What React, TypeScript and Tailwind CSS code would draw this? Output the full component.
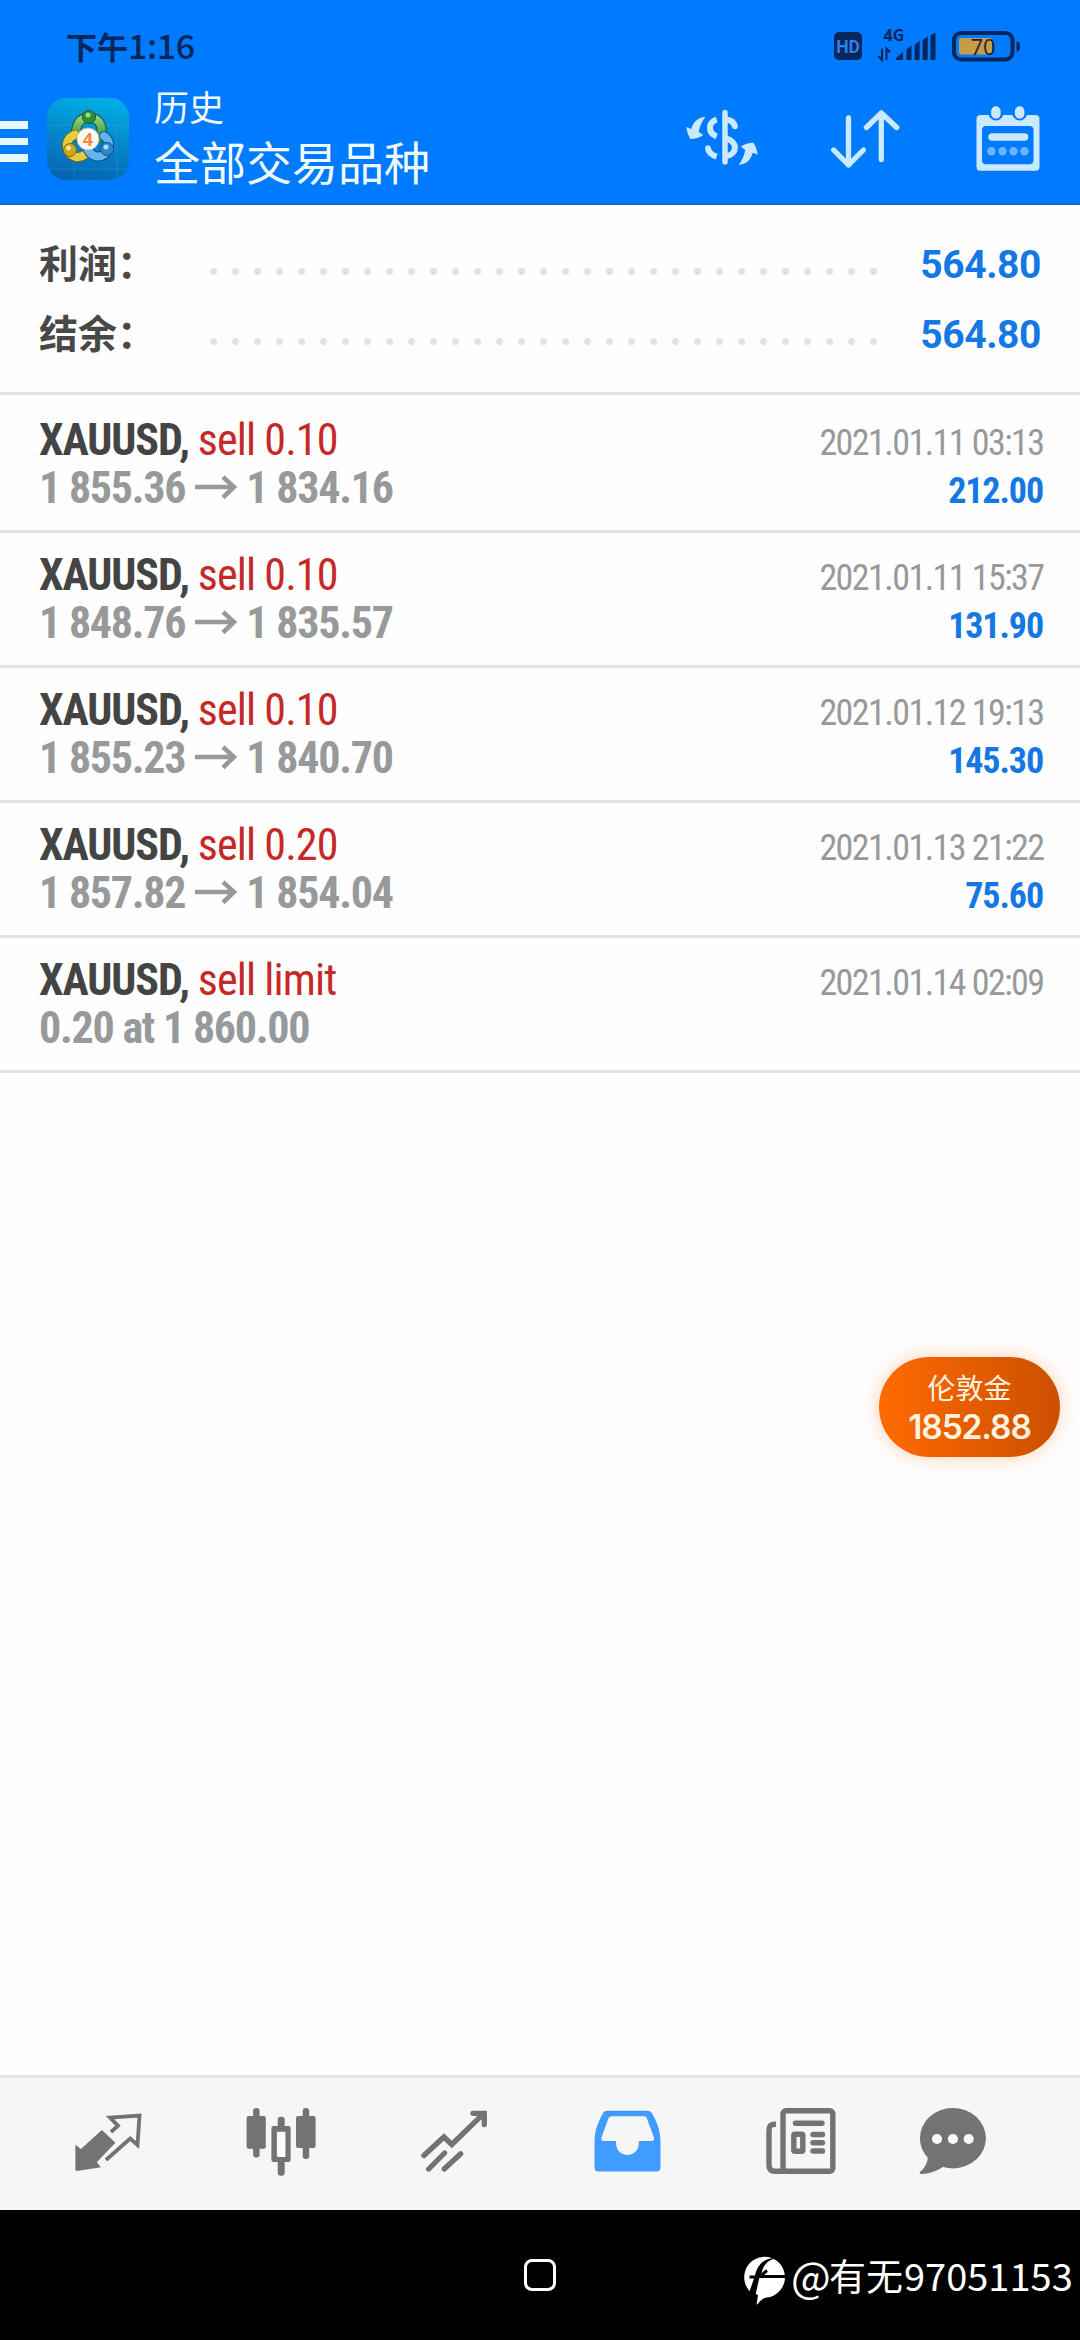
const deals = [
  { side: "sell 0.10", from: "1 855.36", to: "1 834.16", time: "2021.01.11 03:13", profit: "212.00" },
  { side: "sell 0.10", from: "1 848.76", to: "1 835.57", time: "2021.01.11 15:37", profit: "131.90" },
  { side: "sell 0.10", from: "1 855.23", to: "1 840.70", time: "2021.01.12 19:13", profit: "145.30" },
  { side: "sell 0.20", from: "1 857.82", to: "1 854.04", time: "2021.01.13 21:22", profit: "75.60" },
  // pending order, never filled
  { side: "sell limit", from: "0.20 at 1 860.00", time: "2021.01.14 02:09" },
];

type Deal = { side: string; from: string; to?: string; time: string; profit?: string };

function StatusBar() {
  return (
    <div className="flex h-[92px] items-start justify-between pl-[66px] pr-[60px] text-[#06265c]">
      <div className="mt-[22px] flex h-[46px] items-center text-[31px] font-bold leading-none">
        下午<span className="text-[34px] font-medium tracking-[-0.4px]">1:16</span>
      </div>
      <svg className="mt-[22px]" width="187" height="44" viewBox="0 -4 187 44" fill="currentColor">
        {/* HD */}
        <rect x="1" y="6" width="28" height="28" rx="5" />
        <text x="15" y="26.500" fontSize="17.500" fontWeight="700" fill="#2f80ea" textAnchor="middle" fontFamily="Roboto, sans-serif">HD</text>
        {/* signal */}
        <text x="50.500" y="15" fontSize="16" fontWeight="700" fontFamily="Open Sans, sans-serif">4G</text>
        <path d="M49 22.500V34l-3.500-4M53.500 34V22.500l3.500 4" fill="none" stroke="currentColor" strokeWidth="2" />
        <path d="M63 34v-2l7-6v8zM73.500 34V23.500l5-4V34zM81.700 34V19l5-4.500V34zM89.700 34V14l5-3.500V34zM97.500 34V9.500l5-3V34z" />
        {/* battery */}
        <rect x="121" y="7" width="58.500" height="26.500" rx="7" fill="none" stroke="currentColor" strokeWidth="4" />
        <path d="M183.500 15.500q3.500 0 3.500 5t-3.500 5z" />
        <rect x="126" y="12" width="33" height="16.500" rx="2.500" fill="#c69c49" />
        <text x="150" y="28.500" fontSize="22" fill="#1c2433" textAnchor="middle" fontFamily="Open Sans, sans-serif">70</text>
      </svg>
    </div>
  );
}

function AppLogo() {
  return (
    <svg width="82" height="82" viewBox="0 0 82 82">
      <defs>
        <linearGradient id="tile" x1="0.600" y1="0" x2="0.400" y2="1">
          <stop offset="0" stopColor="#02aee6" />
          <stop offset="0.500" stopColor="#0486cb" />
          <stop offset="1" stopColor="#0565b3" />
        </linearGradient>
        <linearGradient id="green" x1="0" y1="0" x2="0" y2="1">
          <stop offset="0" stopColor="#8fd07c" />
          <stop offset="1" stopColor="#3a9638" />
        </linearGradient>
      </defs>
      <rect width="82" height="82" rx="19" fill="url(#tile)" />
      <path d="M0 27h82M0 71h82M27 0v82M70 0v82" stroke="#4cc3ee" strokeOpacity="0.200" />
      <g fill="none" strokeLinecap="round">
        <path d="M31 40C26 28 33 19.500 42 19.500s16 8.500 11 20.500" stroke="#1d5a2c" strokeWidth="10" />
        <path d="M31 40C26 28 33 19.500 42 19.500s16 8.500 11 20.500" stroke="url(#green)" strokeWidth="8" />
        <path d="M28 36.500c-9 4-11 13-4 20 5 4 10 3 14 0" stroke="#6d6a17" strokeWidth="10" />
        <path d="M28 36.500c-9 4-11 13-4 20 5 4 10 3 14 0" stroke="#e1cf3f" strokeWidth="8" />
        <path d="M57 38c7 5 6 12 2 17-6 6-14 4-18-3" stroke="#0b4f8f" strokeWidth="10" />
        <path d="M57 38c7 5 6 12 2 17-6 6-14 4-18-3" stroke="#63b4ec" strokeWidth="8" />
      </g>
      <circle cx="42" cy="19" r="6.500" fill="#2f8f38" stroke="#1d5a2c" />
      <circle cx="41" cy="17" r="2.500" fill="#9bd996" />
      <circle cx="23" cy="52" r="6.500" fill="#c9a722" stroke="#7d6a17" />
      <circle cx="21.500" cy="50" r="2.500" fill="#f2e58a" />
      <circle cx="60" cy="51" r="6.500" fill="#2f86cd" stroke="#0b4f8f" />
      <circle cx="59" cy="49" r="2.500" fill="#a9dcf8" />
      <circle cx="41" cy="41" r="11" fill="#fbfaf7" stroke="#b9c0b4" />
      <text x="41" y="47.500" fontSize="18" fontWeight="700" fill="#ef8a3c" textAnchor="middle" fontFamily="Open Sans, sans-serif">4</text>
    </svg>
  );
}

function CurrencyIcon() {
  return (
    <svg width="90" height="75" viewBox="0 0 90 75" fill="none" stroke="#cbe9ff" strokeWidth="5.500">
      <g fill="#cbe9ff" stroke="none">
        <path d="M25.300 12C18 12 13 17 11.300 24L6.300 22c.7 5 2.200 9 4.200 12 4.500 0 9.500-1.500 12.800-4l-4.600-3.300C20 21 22 16 25.300 12z" />
        <path transform="rotate(180 42 35.900)" d="M25.300 12C18 12 13 17 11.300 24L6.300 22c.7 5 2.200 9 4.200 12 4.500 0 9.500-1.500 12.800-4l-4.600-3.300C20 21 22 16 25.300 12z" />
      </g>
      <path d="M45 7.500V57" strokeLinecap="round" />
      <path strokeWidth="6" d="M36.700 14.500c-9 3-9 13.500 0 17" />
      <path strokeWidth="6" d="M28 43c.5 5 3.500 7 8.700 8.500" />
      <path d="M28 43v.1M55 21.500v.1" strokeLinecap="round" />
      <path strokeWidth="6" d="M46 14.500c5 .5 8 2.500 9 7" />
      <path strokeWidth="6" d="M46 33.500c12 3 12 15.500 0 17.500" />
    </svg>
  );
}

function SortIcon() {
  return (
    <svg width="80" height="80" viewBox="0 0 80 80" fill="none" stroke="#cbe9ff" strokeWidth="5.300" strokeLinecap="round" strokeLinejoin="round">
      <path d="M23.500 18v47M8.700 50l14.800 15 14.900-15" />
      <path d="M56.300 59.500V13M41.400 27.500L56.300 13l15.400 14.500" />
    </svg>
  );
}

function CalendarIcon() {
  return (
    <svg width="80" height="80" viewBox="0 0 80 80">
      <path fill="#cbe9ff" fillRule="evenodd" d="M10.500 15h55a4 4 0 0 1 4 4v47.700a4 4 0 0 1-4 4h-55a4 4 0 0 1-4-4V19a4 4 0 0 1 4-4zm5.500 11a4 4 0 0 0-4 4v30.300a4 4 0 0 0 4 4h43.500a4 4 0 0 0 4-4V30a4 4 0 0 0-4-4z" />
      <g stroke="#007aff" strokeWidth="15" strokeLinecap="round">
        <path d="M25.900 10v3M49.700 10v3" />
      </g>
      <g stroke="#cbe9ff" strokeLinecap="round">
        <path strokeWidth="9.500" d="M25.900 11v3M49.700 11v3" />
        <path strokeWidth="7.500" d="M22 37h32.500" />
      </g>
      <g fill="#6db4ff">
        <circle cx="21.400" cy="51.300" r="4.200" />
        <circle cx="32.500" cy="51.300" r="4.200" />
        <circle cx="43.500" cy="51.300" r="4.200" />
        <circle cx="54.500" cy="51.300" r="4.200" />
      </g>
    </svg>
  );
}

function Header() {
  return (
    <header className="h-[205px] border-b-2 border-[#1269c8] bg-[#007aff]">
      <StatusBar />
      <div className="flex h-[108px] items-start">
        <div className="mt-[29px] flex w-[28px] flex-col gap-[9px]">
          <span className="h-[7.500px] bg-[#e8f8ff]" />
          <span className="h-[7.500px] bg-[#e8f8ff]" />
          <span className="h-[7.500px] bg-[#e8f8ff]" />
        </div>
        <div className="ml-[19px] mt-[6px]">
          <AppLogo />
        </div>
        <div className="-mt-[4px] ml-[25px] flex flex-col text-[#f0fbff]">
          <div className="h-[35px] text-[35px] leading-[35px]">历史</div>
          <div className="mt-[14px] h-[46px] text-[46px] leading-[46px]">全部交易品种</div>
        </div>
        <div className="ml-auto flex pr-[30px] pt-[8px]">
          <div className="mr-[55px] mt-[5px]">
            <CurrencyIcon />
          </div>
          <div className="mr-[65px]">
            <SortIcon />
          </div>
          <CalendarIcon />
        </div>
      </div>
    </header>
  );
}

function SummaryRow({ label, value }: { label: string; value: string }) {
  return (
    <div className="flex h-[70px] items-center pl-[39px] pr-[39px]">
      <div className="-mt-[6px] w-[171px] text-[39px] font-bold text-[#484848]">{label}</div>
      <div className="mt-[14px] flex gap-[15px]">
        {Array.from({ length: 31 }, (_, i) => (
          <span key={i} className="size-[7px] rounded-full bg-[#e2e2e2]" />
        ))}
      </div>
      <div className="ml-auto mt-[2px] text-[39px] font-bold tracking-[-0.4px] text-[#1478e4] [font-family:Roboto,sans-serif]">
        {value}
      </div>
    </div>
  );
}

function DealRow({ deal }: { deal: Deal }) {
  return (
    <div className="flex h-[135px] justify-between border-b-[3px] border-[#e3e3e3] pl-[39px] pr-[38px] pt-[18px]">
      <div className="text-[44px] leading-[48px] tracking-[-1.1px]">
        <div>
          <span className="font-bold text-[#444]">XAUUSD,</span>{" "}
          <span className="tracking-[-0.9px] text-[#c62828]">{deal.side}</span>
        </div>
        <div className="flex items-center font-bold tracking-[-1.25px] text-[#97999b]">
          {deal.from}
          {deal.to && (
            <>
              <svg className="ml-[10px] mr-[8px]" width="43" height="26" viewBox="0 0 43 26" fill="none" stroke="currentColor" strokeWidth="4.500">
                <path d="M0 12h39M28 2L39 12 28 22.500" />
              </svg>
              {deal.to}
            </>
          )}
        </div>
      </div>
      <div className="pt-[3px] text-right text-[36px] leading-[48px]">
        <div className="-mr-[1.500px] tracking-[-1.550px] text-[#97999b]">{deal.time}</div>
        {deal.profit && <div className="-mr-[1px] font-bold tracking-[-1.100px] text-[#1478e4]">{deal.profit}</div>}
      </div>
    </div>
  );
}

function TabBar() {
  return (
    <nav className="flex h-[135px] border-t-[3px] border-[#e5e5e5] bg-[#f6f6f6] pl-[70px] pt-[22px] text-[#737373]">
      {/* quotes */}
      <svg width="80" height="80" viewBox="0 0 80 80">
        <path fill="currentColor" d="M31.900 30l13.500 12.700-18.600 19.600 4.100 5L6.900 71a1.500 1.500 0 0 1-1.500-1.500V44.700l5.500 4.300z" />
        <path fill="none" stroke="currentColor" strokeWidth="3.800" d="M41 32l7-6.300-8-8 29.500-2.200-2 29.500-7.300-6.500L36 60" />
      </svg>
      {/* chart */}
      <svg className="ml-[90px]" width="80" height="80" viewBox="0 0 80 80">
        <g fill="currentColor">
          <rect x="13.100" y="8" width="6.500" height="49.500" rx="3" />
          <rect x="6.600" y="16" width="19.200" height="32.700" rx="2" />
          <rect x="62.700" y="8" width="6.500" height="51" rx="3" />
          <rect x="56" y="16" width="19.600" height="32" rx="2" />
          <rect x="37.700" y="16.700" width="7" height="59" rx="3" />
          <rect x="31.400" y="26" width="19.200" height="36" rx="2" />
        </g>
        <rect x="36.900" y="31.700" width="8.600" height="25.300" rx="1" fill="#fafafa" />
      </svg>
      {/* trade */}
      <svg className="ml-[95px]" width="80" height="80" viewBox="0 0 80 80" fill="none" stroke="currentColor" strokeWidth="5.300" strokeLinecap="round">
        <path d="M8.900 55.500l20-18.500 7.900 7.500 32-31.200M58 13.300h11.300v11.200" />
        <path d="M29.600 53L13.700 69M45.700 53.700L29.200 69" />
      </svg>
      {/* history */}
      <svg className="ml-[95px]" width="80" height="80" viewBox="0 0 80 80">
        <path fill="#409cff" fillRule="evenodd" d="M17.500 10.700H57c3 0 4.500 1.300 6 4.300 5 9 7.500 17 7.500 28v24.500a4 4 0 0 1-4 4h-58a4 4 0 0 1-4-4V43c0-11 2.500-19 7.500-28 1.500-3 2.500-4.300 5.500-4.300zM22 16.300c-2 0-3 .7-3.700 2.500l-6.700 18.500c-.7 2.200 0 3.700 2.200 3.700h12.300v2.500c0 6.500 4.900 11.500 11.300 11.500s11.400-5 11.400-11.500V41h13c2 0 2.800-1.500 2-3.700L57 18.800c-.6-1.800-1.600-2.500-3.600-2.500z" />
      </svg>
      {/* news */}
      <svg className="ml-[90px]" width="80" height="80" viewBox="0 0 80 80" fill="none" stroke="currentColor" strokeWidth="5.400">
        <rect x="23" y="10.700" width="49.800" height="60.600" rx="3" />
        <path d="M16 24.300h-1.500q-5.500 0-5.500 6V65q0 6.300 6 6.300h10" />
        <path d="M35.500 23.300h26.500M53 34.500h9.500M53 42.700h9.500M53 51h9.500" strokeLinecap="round" />
        <rect x="33.800" y="34.300" width="9" height="17" rx="1" />
      </svg>
      {/* messages */}
      <svg className="ml-[74px]" width="80" height="80" viewBox="0 0 80 80">
        <g fill="currentColor">
          <ellipse cx="38.900" cy="38.200" rx="33" ry="30.200" />
          <path d="M13.500 54c1.500 6-2 13.500-7.500 18-.8 1.200-.2 2 1 2 10-.5 17-3.500 22.500-7.500z" />
        </g>
        <g fill="#fafafa">
          <circle cx="23" cy="39" r="5.100" />
          <circle cx="38.900" cy="39" r="5.100" />
          <circle cx="54.700" cy="39" r="5.100" />
        </g>
      </svg>
    </nav>
  );
}

export default function App() {
  return (
    <div className="relative flex h-[2340px] w-[1080px] flex-col overflow-hidden bg-[#fefefe] [font-family:'Noto_Sans_CJK_SC',sans-serif]">
      <Header />

      <section className="h-[190px] border-b-[3px] border-[#e3e3e3] pt-[24px]">
        <SummaryRow label="利润：" value="564.80" />
        <SummaryRow label="结余：" value="564.80" />
      </section>

      <main className="flex-1 pt-[3px] [font-family:'Roboto_Condensed',Roboto,sans-serif] [font-stretch:75%]">
        {deals.map((deal) => (
          <DealRow key={deal.time} deal={deal} />
        ))}
      </main>

      <TabBar />

      {/* system navigation */}
      <div className="flex h-[130px] items-start bg-black text-white">
        <div className="ml-[524px] mt-[49px] size-[32px] rounded-[8px] border-[3px] border-white" />
        <svg className="ml-[187px] mt-[46px]" width="44" height="52" viewBox="0 0 44 52">
          <path fill="white" d="M21.500 0.700a20.500 20.500 0 0 1 2 40.900C19.500 42.500 17 45 13.500 49L15 39 7.500 36A20.500 20.500 0 0 1 21.500.7z" />
          <path fill="black" d="M33 2.500C26 3.500 20.500 8 18.500 17l-2 4L12.500 39 6 37l5-14.500H6.500V19.500H12C14 10 21 1 33 2.500z" />
          <path fill="none" stroke="black" strokeWidth="3" d="M42 20.500H17l7-6" />
        </svg>
        <div className="ml-[4px] mt-[40px] flex items-center whitespace-nowrap text-[37px] leading-[50px]">
          <span className="w-[38px] text-[42px]">@</span>
          有无
          <span className="ml-[1px] text-[38px]">97051153</span>
        </div>
      </div>

      {/* floating price */}
      <div className="absolute left-[879px] top-[1357px] flex h-[100px] w-[181px] flex-col items-center rounded-full bg-gradient-to-r from-[#ff6a00] to-[#cc4f00] text-[#fff3df] shadow-[0_0_20px_rgba(255,106,0,0.3)]">
        <div className="mt-[15px] text-[28px] leading-[30px]">伦敦金</div>
        <div className="text-[33.500px] font-semibold leading-[50px] tracking-[-1.100px] [font-family:Inter,sans-serif]">1852.88</div>
      </div>
    </div>
  );
}
